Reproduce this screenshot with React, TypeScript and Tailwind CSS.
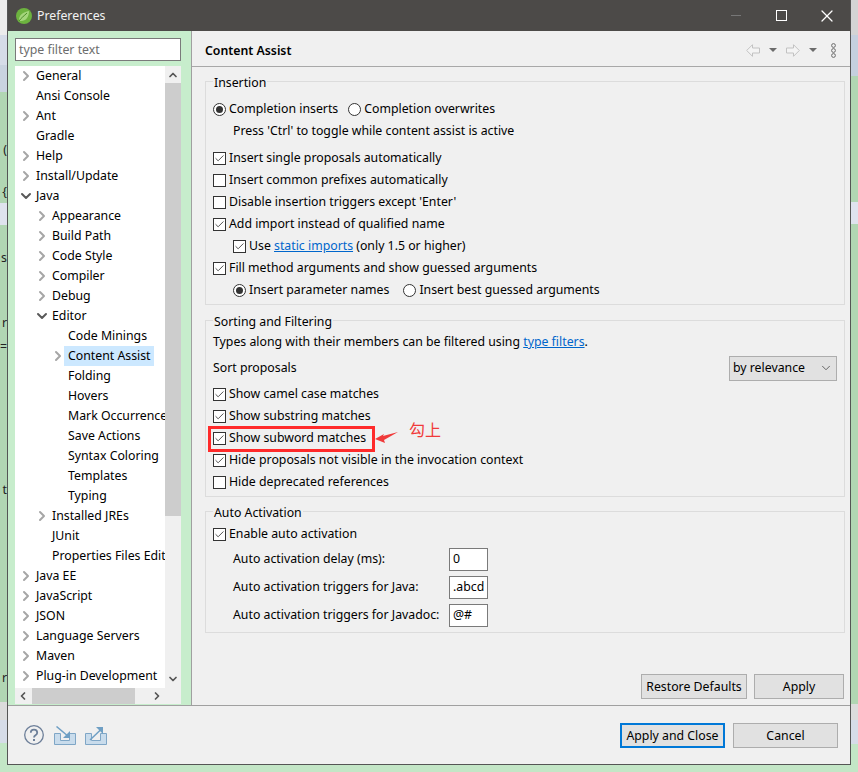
import { ChevronDown, ChevronLeft, ChevronRight, ChevronUp, Check, X } from 'lucide-react'
import { FC, ReactNode } from 'react'

type TreeRow = {
  label: string
  depth: number
  arrow?: 'closed' | 'open'
  selected?: boolean
}

const treeRows: TreeRow[] = [
  { label: 'General', depth: 0, arrow: 'closed' },
  { label: 'Ansi Console', depth: 0 },
  { label: 'Ant', depth: 0, arrow: 'closed' },
  { label: 'Gradle', depth: 0 },
  { label: 'Help', depth: 0, arrow: 'closed' },
  { label: 'Install/Update', depth: 0, arrow: 'closed' },
  { label: 'Java', depth: 0, arrow: 'open' },
  { label: 'Appearance', depth: 1, arrow: 'closed' },
  { label: 'Build Path', depth: 1, arrow: 'closed' },
  { label: 'Code Style', depth: 1, arrow: 'closed' },
  { label: 'Compiler', depth: 1, arrow: 'closed' },
  { label: 'Debug', depth: 1, arrow: 'closed' },
  { label: 'Editor', depth: 1, arrow: 'open' },
  { label: 'Code Minings', depth: 2 },
  { label: 'Content Assist', depth: 2, arrow: 'closed', selected: true },
  { label: 'Folding', depth: 2 },
  { label: 'Hovers', depth: 2 },
  { label: 'Mark Occurrences', depth: 2 },
  { label: 'Save Actions', depth: 2 },
  { label: 'Syntax Coloring', depth: 2 },
  { label: 'Templates', depth: 2 },
  { label: 'Typing', depth: 2 },
  { label: 'Installed JREs', depth: 1, arrow: 'closed' },
  { label: 'JUnit', depth: 1 },
  { label: 'Properties Files Editor', depth: 1 },
  { label: 'Java EE', depth: 0, arrow: 'closed' },
  { label: 'JavaScript', depth: 0, arrow: 'closed' },
  { label: 'JSON', depth: 0, arrow: 'closed' },
  { label: 'Language Servers', depth: 0, arrow: 'closed' },
  { label: 'Maven', depth: 0, arrow: 'closed' },
  { label: 'Plug-in Development', depth: 0, arrow: 'closed' }
]

// the desktop windows peeking out behind the dialog, top to bottom
type Band = { h: number; color: string; text?: string }

const GREEN = '#b1d6b3'

const leftBands: Band[] = [
  { h: 35, color: '#ececec' },
  { h: 30, color: '#d6dce8' },
  { h: 27, color: '#c9d3e0' },
  { h: 51, color: GREEN },
  { h: 14, color: GREEN, text: '(' },
  { h: 28, color: GREEN },
  { h: 15, color: GREEN, text: '{' },
  { h: 3, color: GREEN },
  { h: 22, color: '#dfe3ee' },
  { h: 25, color: GREEN },
  { h: 16, color: GREEN, text: 's' },
  { h: 49, color: GREEN },
  { h: 17, color: GREEN, text: 'r' },
  { h: 8, color: GREEN },
  { h: 14, color: GREEN, text: '=' },
  { h: 128, color: GREEN },
  { h: 16, color: GREEN, text: 't' },
  { h: 172, color: GREEN },
  { h: 16, color: GREEN, text: 'r' },
  { h: 16, color: GREEN },
  { h: 18, color: '#dcdcdc' },
  { h: 23, color: '#d6dce8' }
]

const rightBands: Band[] = [
  { h: 35, color: '#d4d4d4' },
  { h: 41, color: '#c5d0de' },
  { h: 126, color: GREEN },
  { h: 22, color: '#dfe3ee' },
  { h: 480, color: GREEN },
  { h: 16, color: '#dcdcdc' },
  { h: 24, color: '#d6dce8' }
]

const Strip: FC<{ bands: Band[]; className: string }> = ({ bands, className }) => (
  <div className={`overflow-hidden ${className}`}>
    {bands.map((band, i) => (
      <div
        key={i}
        className="flex items-center justify-end text-[#222]"
        style={{ height: band.h, backgroundColor: band.color }}
      >
        {band.text}
      </div>
    ))}
  </div>
)

const CheckRow: FC<{ checked?: boolean; children: ReactNode; className?: string }> = ({
  checked,
  children,
  className = ''
}) => (
  <div className={`flex h-[22px] items-center ${className}`}>
    <span className="flex size-[13px] shrink-0 items-center justify-center border border-[#333] bg-white">
      {checked && <Check className="size-[11px] text-[#444]" strokeWidth={2} />}
    </span>
    <span className="ml-[3px] whitespace-nowrap">{children}</span>
  </div>
)

const Radio: FC<{ checked?: boolean; children: ReactNode }> = ({ checked, children }) => (
  <span className="flex items-center whitespace-nowrap">
    <span className="flex size-[13px] shrink-0 items-center justify-center rounded-full border border-[#333] bg-white">
      {checked && <span className="size-[7px] rounded-full bg-[#333]" />}
    </span>
    <span className="ml-[3px]">{children}</span>
  </span>
)

const Group: FC<{ title: string; className?: string; children: ReactNode }> = ({
  title,
  className = '',
  children
}) => (
  <fieldset className={`border border-[#dcdcdc] pl-[7px] ${className}`}>
    <legend className="h-[13px] px-[1px] leading-[15px]">{title}</legend>
    {children}
  </fieldset>
)

const Btn: FC<{ className: string; primary?: boolean; children: ReactNode }> = ({
  className,
  primary,
  children
}) => (
  <button
    className={`h-[25px] bg-[#e1e1e1] pt-[2px] ${
      primary ? 'border-2 border-[#0078d7]' : 'border border-[#adadad]'
    } ${className}`}
  >
    {children}
  </button>
)

const ActivationRow: FC<{ label: string; value: string }> = ({ label, value }) => (
  <div className="flex h-[28px] items-center pl-[20px]">
    <span className="w-[216px] shrink-0 whitespace-nowrap">{label}</span>
    <div className="flex h-[23px] w-[39px] items-center border border-[#7a7a7a] bg-white pl-[3px]">
      {value}
    </div>
  </div>
)

const PrefTree = () => (
  <div className="h-[622px] overflow-hidden bg-white">
    {treeRows.map(row => (
      <div
        key={row.label}
        className={`flex h-5 items-center whitespace-nowrap ${
          row.depth === 1 ? 'pl-[16px]' : row.depth === 2 ? 'pl-[32px]' : ''
        }`}
      >
        <span className="flex w-[21px] shrink-0 justify-center">
          {row.arrow === 'closed' && (
            <ChevronRight className="size-[16px] text-[#a6a6a6]" strokeWidth={3} />
          )}
          {row.arrow === 'open' && (
            <ChevronDown className="size-[16px] text-[#595959]" strokeWidth={3} />
          )}
        </span>
        <span className={row.selected ? '-ml-[4px] bg-[#cce8ff] pl-[4px] pr-[3px] leading-5' : ''}>
          {row.label}
        </span>
      </div>
    ))}
  </div>
)

const SpringLeaf = () => (
  <svg viewBox="0 0 16 16" className="size-[16px] shrink-0">
    <circle cx="8" cy="8" r="8" fill="#6db33f" />
    <path d="M3 12c0-5 4-8 10-9 0 6-3 10-8 10-1 0-2-.4-2-1z" fill="#a4d67c" />
    <path d="M3 13c2-3 5-5 8-8" stroke="#4d8c2a" strokeWidth="1" fill="none" />
  </svg>
)

const BackArrow = () => (
  <svg viewBox="0 0 14 13" className="h-[13px] w-[14px]" fill="#f4f4f4" stroke="#c2c2c2">
    <path d="M.7 6.500L6.500.7v3.300h7v5h-7v3.300z" />
  </svg>
)

const ForwardArrow = () => (
  <svg viewBox="0 0 14 13" className="h-[13px] w-[14px]" fill="#f4f4f4" stroke="#c2c2c2">
    <path d="M13.300 6.500L7.500.7v3.300h-7v5h7v3.300z" />
  </svg>
)

const TriDown = () => (
  <svg viewBox="0 0 8 4" className="h-[4px] w-[8px]" fill="#6b6b6b">
    <path d="M0 0h8L4 4z" />
  </svg>
)

const ImportIcon = () => (
  <svg viewBox="0 0 22 19" className="h-[19px] w-[22px]" fill="none">
    <path d="M.5 7.500h6v7h9v-7h6v11h-21z" fill="#c9dcec" stroke="#7fa6c6" />
    <path d="M2.500.5L15 11" stroke="#6f9fc4" strokeWidth="1.500" />
    <path d="M16 5v7h-7z" fill="#6f9fc4" />
  </svg>
)

const ExportIcon = () => (
  <svg viewBox="0 0 22 19" className="h-[19px] w-[22px]" fill="none">
    <path d="M.5 7.500h6v7h9v-7h6v11h-21z" fill="#c9dcec" stroke="#7fa6c6" />
    <path d="M5 14L17 2.500" stroke="#6f9fc4" strokeWidth="1.500" />
    <path d="M11 1h7v7z" fill="#6f9fc4" />
  </svg>
)

export default function App() {
  return (
    <div className="flex h-[772px] w-[858px] overflow-hidden bg-[#c3e6c6] font-['Noto_Sans','Liberation_Sans',sans-serif] text-[12.3px] leading-none text-black">
      <Strip bands={leftBands} className="h-[765px] w-[7px] shrink-0" />

      <div className="flex h-[765px] w-[844px] shrink-0 flex-col border-x border-b border-[#555]">
        <div className="flex h-[31px] shrink-0 items-center bg-[#4c4a48] pl-[8px]">
          <SpringLeaf />
          <span className="ml-[5px] pt-[2px] text-[#f2f2f2]">Preferences</span>
          <div className="ml-auto flex items-center">
            <div className="h-px w-[10px] bg-[#777]" />
            <div className="ml-[35px] size-[11px] border-[1.5px] border-white" />
            <X className="ml-[30px] mr-[13px] size-[20px] text-white" strokeWidth={1.500} />
          </div>
        </div>

        <div className="flex min-h-0 flex-1">
          <div className="w-[184px] shrink-0 border-r border-[#a0a0a0] bg-[#c7edcc] pl-[7px] pt-[7px]">
            <div className="flex h-[23px] w-[166px] items-center border border-[#7a7a7a] bg-white pl-[3px] pt-[2px] text-[#6d6d6d]">
              type filter text
            </div>
            <div className="mt-[5px] flex w-[166px]">
              <div className="w-[150px] shrink-0">
                <PrefTree />
                <div className="flex h-[16px] items-center bg-[#f0f0f0]">
                  <ChevronLeft className="ml-[2px] size-[12px] text-[#555]" strokeWidth={3.500} />
                  <div className="ml-[3px] h-full w-[103px] bg-[#cdcdcd]" />
                  <ChevronRight className="ml-auto mr-[2px] size-[12px] text-[#555]" strokeWidth={3.500} />
                </div>
              </div>
              <div className="flex h-[638px] w-[16px] flex-col items-center bg-[#f0f0f0]">
                <ChevronUp className="mt-[3px] size-[12px] text-[#555]" strokeWidth={3.500} />
                <div className="mt-[2px] h-[433px] w-full bg-[#cdcdcd]" />
                <ChevronDown className="mb-[19px] mt-auto size-[12px] text-[#555]" strokeWidth={3.500} />
              </div>
            </div>
          </div>

          <div className="min-w-0 flex-1 bg-[#f0f0f0]">
            <div className="flex h-[36px] items-center border-b border-[#a8a8a8] pl-[13px] pt-[3px]">
              <span className="pt-[2px] font-semibold">Content Assist</span>
              <div className="ml-auto mr-[14px] flex items-center">
                <BackArrow />
                <span className="ml-[9px]"><TriDown /></span>
                <span className="ml-[9px]"><ForwardArrow /></span>
                <span className="ml-[9px]"><TriDown /></span>
                <svg viewBox="0 0 5 15" className="ml-[14px] h-[15px] w-[5px]" fill="#f0f0f0" stroke="#6b6b6b">
                  <circle cx="2.500" cy="2.500" r="1.900" />
                  <circle cx="2.500" cy="7.500" r="1.900" />
                  <circle cx="2.500" cy="12.500" r="1.900" />
                </svg>
              </div>
            </div>

            <div className="pl-[13px] pr-[5px] pt-[8px]">
              <Group title="Insertion" className="h-[230px]">
                <div className="mt-[10px] flex h-[22px] items-center gap-[10px]">
                  <Radio checked>Completion inserts</Radio>
                  <Radio>Completion overwrites</Radio>
                </div>
                <div className="flex h-[22px] items-center pl-[20px]">
                  Press 'Ctrl' to toggle while content assist is active
                </div>
                <CheckRow checked className="mt-[5px]">Insert single proposals automatically</CheckRow>
                <CheckRow>Insert common prefixes automatically</CheckRow>
                <CheckRow>Disable insertion triggers except 'Enter'</CheckRow>
                <CheckRow checked>Add import instead of qualified name</CheckRow>
                <CheckRow checked className="pl-[20px]">
                  Use <span className="text-[#0066cc] underline">static imports</span> (only 1.5 or higher)
                </CheckRow>
                <CheckRow checked>Fill method arguments and show guessed arguments</CheckRow>
                <div className="flex h-[22px] items-center gap-[14px] pl-[20px]">
                  <Radio checked>Insert parameter names</Radio>
                  <Radio>Insert best guessed arguments</Radio>
                </div>
              </Group>

              <Group title="Sorting and Filtering" className="mt-[9px] h-[183px]">
                <div className="mt-[4px] flex h-[22px] items-center whitespace-pre">
                  Types along with their members can be filtered using{' '}
                  <span className="text-[#0066cc] underline">type filters</span>.
                </div>
                <div className="flex h-[30px] items-center">
                  <span>Sort proposals</span>
                  <div className="ml-auto mr-[7px] flex h-[25px] w-[108px] items-center border border-[#adadad] bg-[#e1e1e1] pl-[3px]">
                    by relevance
                    <ChevronDown className="ml-auto mr-[3px] size-[14px] text-[#555]" strokeWidth={1.500} />
                  </div>
                </div>
                <CheckRow checked>Show camel case matches</CheckRow>
                <CheckRow checked>Show substring matches</CheckRow>
                <div className="relative">
                  <CheckRow checked>Show subword matches</CheckRow>
                  <div className="absolute left-[-5px] top-[-1px] h-[26px] w-[167px] border-[3px] border-[#ff2a2a]" />
                  <svg viewBox="0 0 24 12" className="absolute left-[162px] top-[5px] h-[12px] w-[24px]" fill="#f03a3a">
                    <path d="M0 7l9-5-1 2 15-4-14 8 1 3z" />
                  </svg>
                  <span className="absolute left-[196px] top-[-6px] font-['Noto_Sans_CJK_SC',sans-serif] text-[16px] text-[#f03a3a]">
                    勾上
                  </span>
                </div>
                <CheckRow checked>Hide proposals not visible in the invocation context</CheckRow>
                <CheckRow>Hide deprecated references</CheckRow>
              </Group>

              <Group title="Auto Activation" className="mt-[8px] h-[128px]">
                <CheckRow checked className="mt-[5px]">Enable auto activation</CheckRow>
                <ActivationRow label="Auto activation delay (ms):" value="0" />
                <ActivationRow label="Auto activation triggers for Java:" value=".abcd" />
                <ActivationRow label="Auto activation triggers for Javadoc:" value="@#" />
              </Group>

              <div className="mr-[1px] mt-[41px] flex justify-end gap-[7px]">
                <Btn className="w-[106px]">Restore Defaults</Btn>
                <Btn className="w-[90px]">Apply</Btn>
              </div>
            </div>
          </div>
        </div>

        <div className="flex h-[59px] shrink-0 items-center border-t border-[#a0a0a0] bg-[#f0f0f0] pl-[16px]">
          <svg viewBox="0 0 20 20" className="size-[20px]" fill="none">
            <circle cx="10" cy="10" r="9.300" stroke="#6d7f99" strokeWidth="1.300" />
            <path d="M6.800 7.800c0-4.200 6.400-4.200 6.400 0 0 2.800-3.200 2.300-3.200 4.700" stroke="#6d7f99" strokeWidth="1.800" />
            <path d="M9 14h2v2H9z" fill="#6d7f99" />
          </svg>
          <span className="ml-[10px]"><ImportIcon /></span>
          <span className="ml-[9px]"><ExportIcon /></span>
          <div className="ml-auto mr-[12px] flex gap-[8px]">
            <Btn primary className="w-[105px]">Apply and Close</Btn>
            <Btn className="w-[105px]">Cancel</Btn>
          </div>
        </div>
      </div>

      <Strip bands={rightBands} className="h-[744px] w-[7px] shrink-0" />
    </div>
  )
}
